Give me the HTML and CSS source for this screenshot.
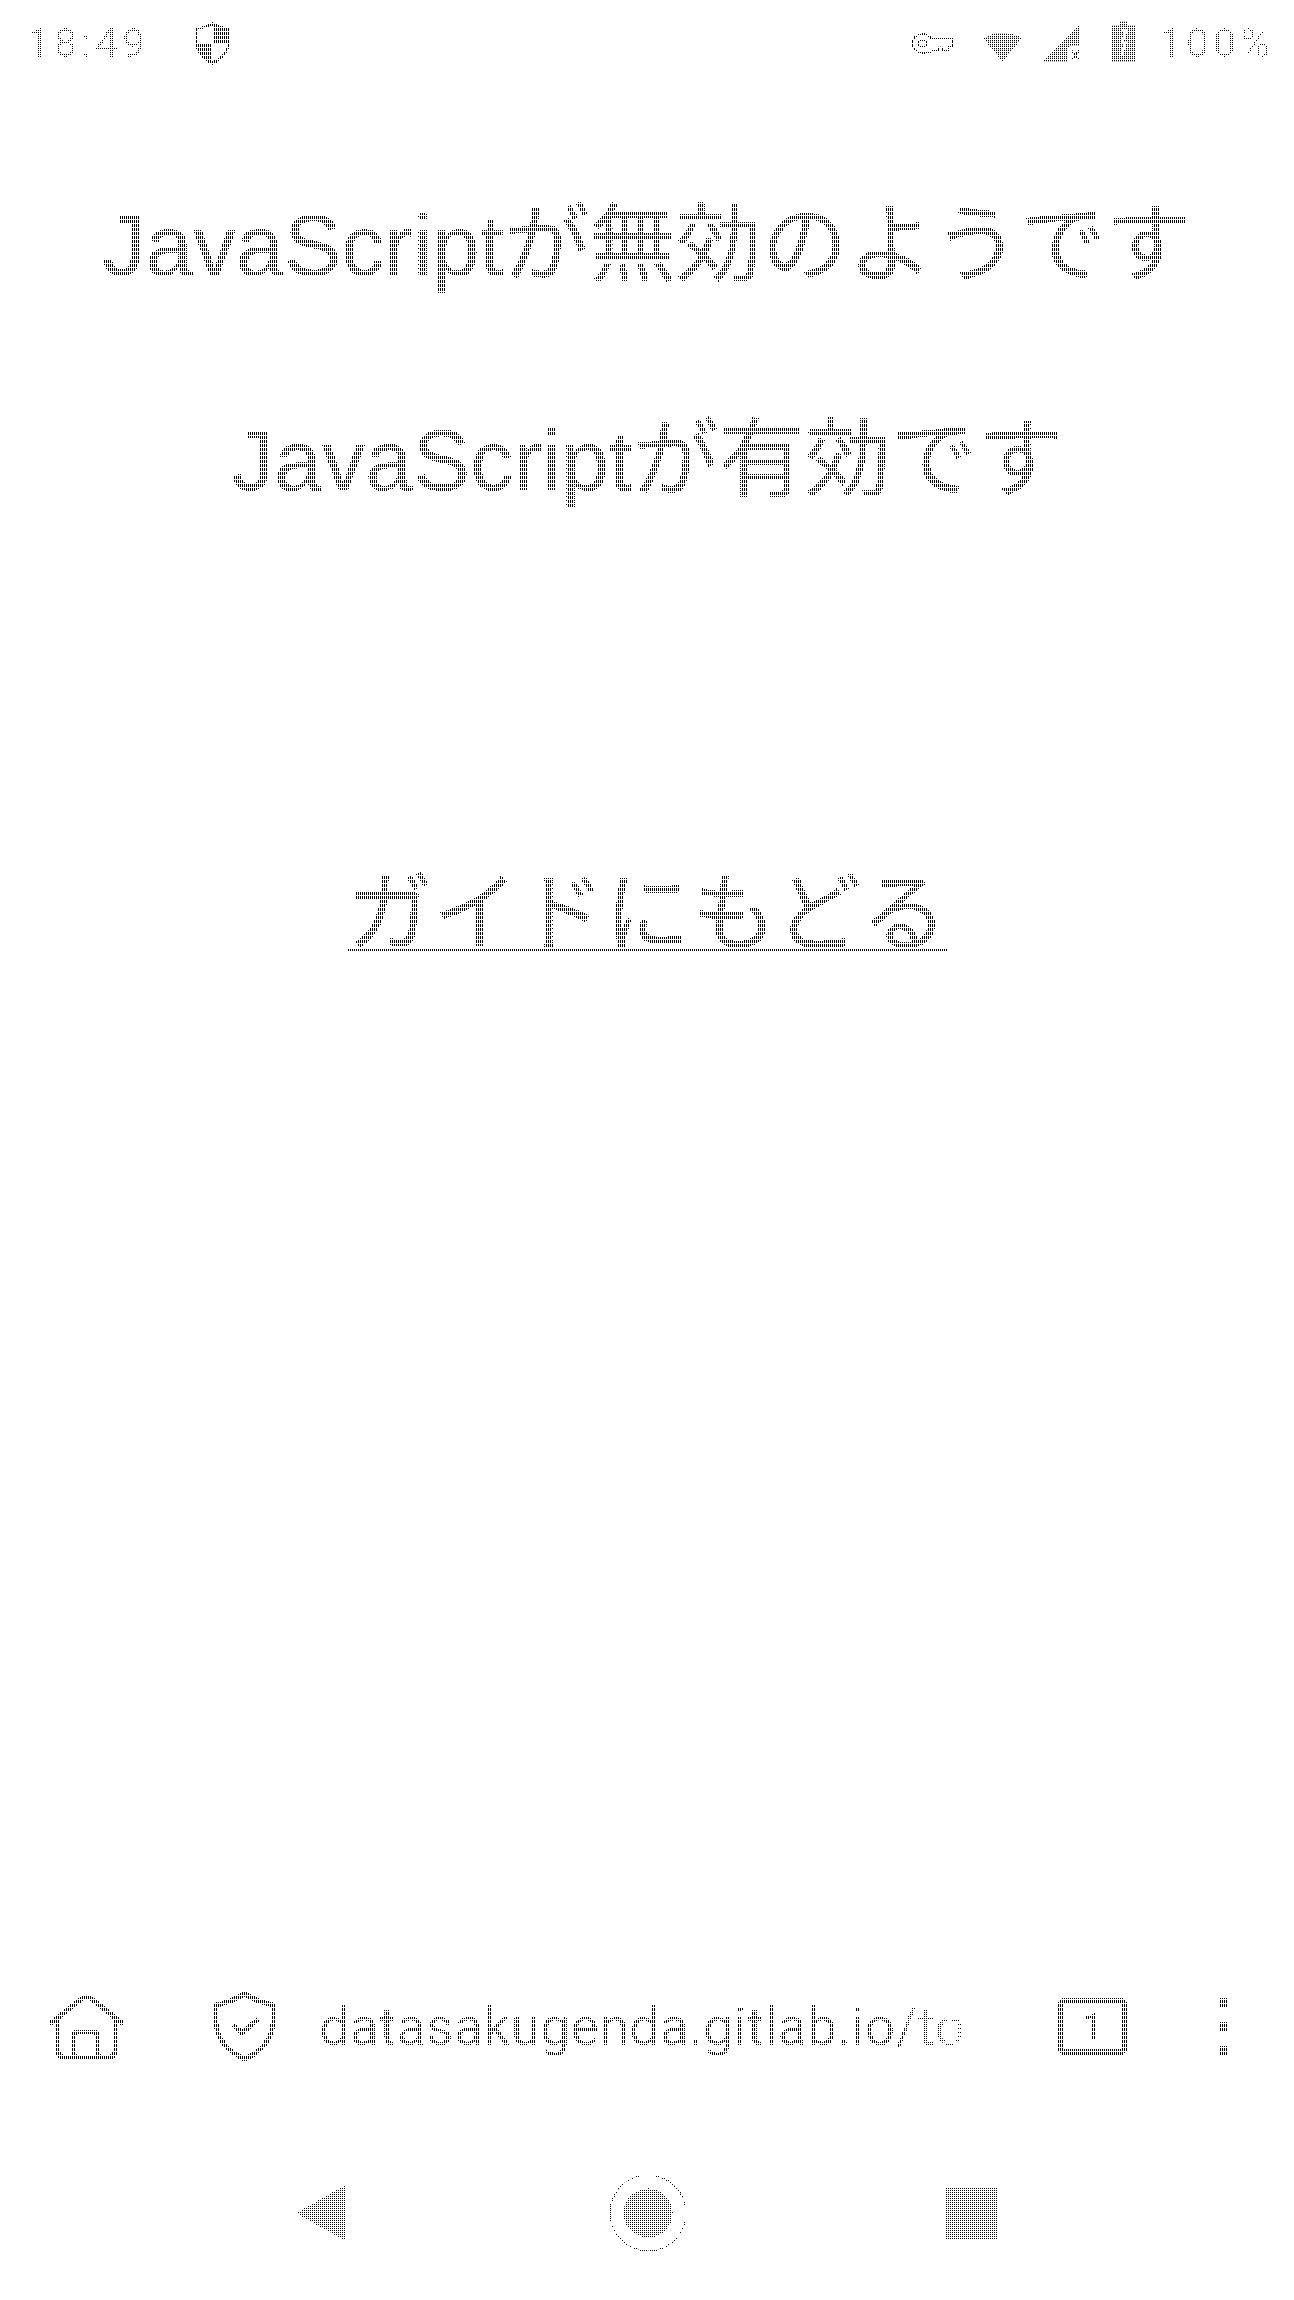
FILE: index.html
```html
<!DOCTYPE html>
<html lang="ja">
<head>
<meta charset="utf-8">
<title>JavaScript</title>
<link rel="stylesheet" href="styles.css">
</head>
<body>
<div class="screen">
  <header class="status">
    <div class="status-left">
      <span class="time">18:49</span>
      <svg class="ic-shield-small" viewBox="0 0 40 46"><path d="M20 1 C14 4 8 6 2 7 V22 C2 32 10 41 20 45 C30 41 38 32 38 22 V7 C32 6 26 4 20 1Z M20 5 V23 H5 V9 C10 8 15 7 20 5Z M20 23 H35 C34 31 28 38 20 41Z" fill="#444" fill-rule="evenodd"/></svg>
    </div>
    <div class="status-right">
      <svg class="ic-key" viewBox="0 0 46 24"><path d="M2 12 C2 5 7 2 12 2 C16 2 19 4 21 7 H44 V15 H40 V20 H33 V16 H28 V20 H22 C19 21 16 22 12 22 C7 22 2 18 2 12Z M8 12 a4 4 0 1 0 8 0 a4 4 0 1 0 -8 0Z" fill="none" stroke="#444" stroke-width="2.400"/></svg>
      <svg class="ic-wifi" viewBox="0 0 40 30"><path d="M0 6 C12 -2 28 -2 40 6 L20 30Z" fill="#555"/></svg>
      <svg class="ic-signal" viewBox="0 0 40 40"><path d="M40 0 V24 H28 V40 H0Z" fill="#555"/><path d="M31 28 l8 10 M39 28 l-8 10" stroke="#333" stroke-width="2.400"/></svg>
      <svg class="ic-batt" viewBox="0 0 26 44"><path d="M8 0 H18 V4 H26 V44 H0 V4 H8Z" fill="#555"/><path d="M11 10 L16 10 L11 24 L15 24 L11 36" stroke="#fff" stroke-width="2" fill="none"/></svg>
      <span class="pct">100%</span>
    </div>
  </header>
  <main class="content">
    <h1 class="title">JavaScriptが無効のようです</h1>
    <h1 class="title second">JavaScriptが有効です</h1>
    <a class="back" href="#">ガイドにもどる</a>
  </main>
  <div class="urlbar">
    <svg class="ic-home" viewBox="0 0 75 67"><path d="M1 31 L32 6 Q37.500 2 43 6 L74 31 M9 26 V59 Q9 64 14 64 H61 Q66 64 66 59 V26 M25 64 V43 Q25 39 29 39 H45 Q49 39 49 43 V64" fill="none" stroke="#111" stroke-width="5"/></svg>
    <svg class="ic-shield" viewBox="0 0 63 71"><path d="M31.500 3 C23 8 13 12 3 14 V31 C3 49 17 62 31.500 68 C46 62 60 49 60 31 V14 C50 12 40 8 31.500 3Z" fill="none" stroke="#111" stroke-width="5"/><path d="M20 34 L29 42 L45 28" fill="none" stroke="#111" stroke-width="5"/></svg>
    <div class="url"><span>datasakugenda.gitlab.io/to</span></div>
    <div class="tabs">1</div>
    <div class="menu"><i></i><i></i><i></i></div>
  </div>
  <nav class="navbar">
    <svg class="ic-back" viewBox="0 0 50 56"><path d="M50 0 V56 L0 28Z" fill="#6e6e6e"/></svg>
    <svg class="ic-circle" viewBox="0 0 78 78"><circle cx="39" cy="39" r="38" fill="none" stroke="#555" stroke-width="1.600"/><circle cx="39" cy="39" r="25" fill="#6e6e6e"/></svg>
    <div class="ic-square"></div>
  </nav>
  <div class="halftone"></div>
</div>
</body>
</html>
```
FILE: styles.css
```css
* { box-sizing: border-box; }
html, body { margin: 0; padding: 0; background: #fff; }
.screen { position: relative; width: 1294px; height: 2300px; display: flex; flex-direction: column; background: #fff; font-family: "Liberation Sans", "Noto Sans CJK JP", sans-serif; color: #000; overflow: hidden; filter: grayscale(1) contrast(100); }
.halftone { position: absolute; inset: 0; pointer-events: none; background-image: linear-gradient(to right, transparent 0 1px, #fff 1px 2px), linear-gradient(to bottom, rgba(255,255,255,0) 0 1px, rgba(255,255,255,.25) 1px 2px, rgba(255,255,255,.1) 2px 3px, #fff 3px 4px); background-size: 2px 4px; }
.status { height: 86px; padding: 0 20px 0 27px; display: flex; justify-content: space-between; align-items: center; flex: none; }
.status-left, .status-right { display: flex; align-items: center; }
.time { font-family: "Roboto", sans-serif; font-size: 41px; color: #5a5a5a; letter-spacing: 4px; }
.ic-shield-small { width: 39px; height: 45px; margin-left: 44px; }
.ic-key { width: 44px; height: 23px; }
.ic-wifi { width: 39px; height: 30px; margin-left: 28px; margin-top: 8px; }
.ic-signal { width: 40px; height: 38px; margin-left: 19px; }
.ic-batt { width: 25px; height: 41px; margin-left: 30px; margin-bottom: 3px; }
.pct { font-family: "Roboto", sans-serif; font-size: 41px; color: #6a6a6a; margin-left: 23px; letter-spacing: 4px; }
.content { flex: 1; display: flex; flex-direction: column; align-items: center; padding-top: 101px; }
.title { margin: 0; font-size: 86px; font-weight: 400; line-height: 116px; color: #000; white-space: nowrap; -webkit-text-stroke: .4px #000; }
.second { margin-top: 99px; }
.back { margin-top: 338px; font-size: 86px; line-height: 116px; color: #000; -webkit-text-stroke: .4px #000; text-decoration: underline; text-underline-offset: 5px; text-decoration-thickness: 3px; }
.urlbar { flex: none; height: 186px; padding: 0 0 14px 49px; display: flex; align-items: center; }
.ic-home { width: 75px; height: 67px; flex: none; }
.ic-shield { width: 63px; height: 71px; margin-left: 89px; flex: none; }
.url { width: 650px; margin-left: 43px; font-family: "Roboto", sans-serif; font-size: 54px; color: #4a4a4a; overflow: hidden; white-space: nowrap; flex: none; -webkit-mask-image: linear-gradient(to right, #000 88%, rgba(0,0,0,.68)); mask-image: linear-gradient(to right, #000 88%, rgba(0,0,0,.68)); }
.tabs { width: 71px; height: 57px; margin-left: 88px; border: 6px solid #000; border-radius: 8px; font-family: "Roboto", sans-serif; font-size: 37px; font-weight: 500; text-align: center; line-height: 45px; color: #000; flex: none; }
.menu { margin-left: 91px; display: flex; flex-direction: column; gap: 15px; flex: none; }
.menu i { display: block; width: 9px; height: 9px; background: #000; }
.navbar { flex: none; height: 174px; display: flex; align-items: center; }
.ic-back { width: 50px; height: 56px; margin-left: 295px; flex: none; }
.ic-circle { width: 78px; height: 78px; margin-left: 264px; flex: none; }
.ic-square { width: 52px; height: 52px; margin-left: 258px; background: #6e6e6e; flex: none; }
```
